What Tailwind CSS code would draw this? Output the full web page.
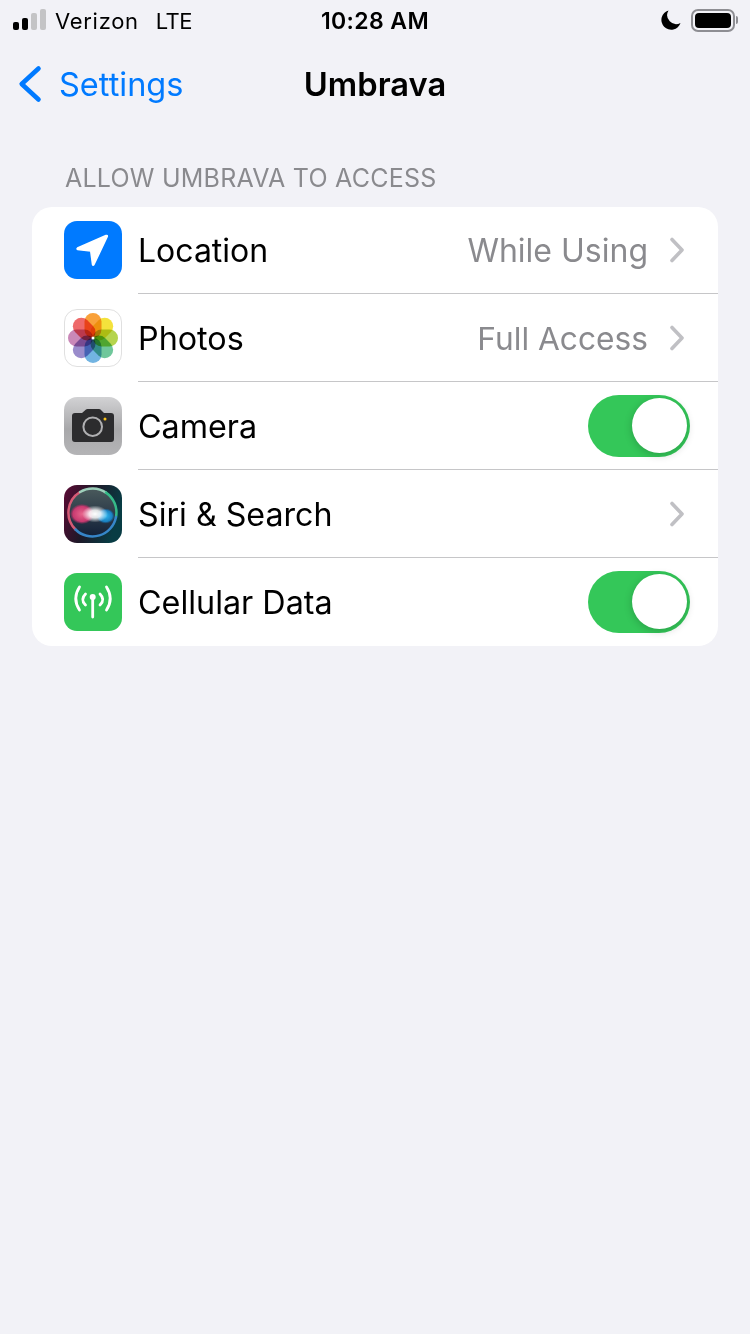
<!DOCTYPE html>
<html lang="en">
<head>
  <meta charset="UTF-8">
  <meta name="viewport" content="width=device-width, initial-scale=1.0">
  <title>Umbrava</title>
  <script src="https://cdn.jsdelivr.net/npm/@tailwindcss/browser@4"></script>
</head>
<body class="bg-[#f2f2f7] min-h-[1334px] font-['Inter','Liberation_Sans',sans-serif] text-black">

  <!-- Status bar -->
  <div class="h-10 flex items-center justify-between pl-[13px] pr-[12px] relative">
    <div class="flex items-center">
      <div class="flex items-end gap-[3px] h-[21px] w-[33px] mb-px">
        <div class="w-[6px] h-[8px] shrink-0 rounded-[2px] bg-black"></div>
        <div class="w-[6px] h-[12px] shrink-0 rounded-[2px] bg-black"></div>
        <div class="w-[6px] h-[17px] shrink-0 rounded-[2px] bg-[#c4c4c6]"></div>
        <div class="w-[6px] h-[21px] shrink-0 rounded-[2px] bg-[#c4c4c6]"></div>
      </div>
      <span class="ml-[9px] mt-[2px] text-[22px] leading-none tracking-[0.7px]">Verizon</span>
      <span class="ml-[17px] mt-[2px] text-[22px] leading-none tracking-[-0.5px]">LTE</span>
    </div>
    <div class="absolute left-0 right-0 mt-[2px] text-center text-[23px] font-semibold leading-none tracking-[0.4px]">10:28 AM</div>
    <div class="flex items-center">
      <svg class="w-[20px] h-[20px] mr-[10px]" viewBox="0 0 20 20"><path d="M7.500 0.500 A9.800 9.800 0 1 0 19.500 13 A9 9 0 0 1 7.500 0.500 Z" fill="#000"/></svg>
      <div class="w-[44px] h-[23px] rounded-[7px] border-2 border-[#8e8e93] p-[2px]">
        <div class="w-full h-full rounded-[4px] bg-black"></div>
      </div>
      <div class="w-[2px] h-[8px] ml-[1px] rounded-r-sm bg-[#8e8e93]"></div>
    </div>
  </div>

  <!-- Nav bar -->
  <div class="h-[88px] flex items-center relative">
    <svg class="w-[26px] h-[40px] ml-[18px]" viewBox="0 0 26 40"><path d="M20.500 4.500 L3.700 20 L20.500 35.500" fill="none" stroke="#007aff" stroke-width="4.600" stroke-linecap="round" stroke-linejoin="round"/></svg>
    <span class="ml-[15px] mt-[2px] text-[32.500px] leading-none text-[#007aff]">Settings</span>
    <div class="absolute left-0 right-0 text-center text-[32.700px] font-semibold leading-none">Umbrava</div>
  </div>

  <!-- Section -->
  <div class="pl-[65px] pt-[37px] h-[79px] text-[25px] leading-[26px] tracking-[0.23px] text-[#8a8a8e]">ALLOW UMBRAVA TO ACCESS</div>

  <div class="mx-8 bg-white rounded-[20px] overflow-hidden">

    <!-- Location -->
    <div class="h-[87px] flex items-center pl-8 pr-7 pb-px relative">
      <svg class="w-[58px] h-[58px] shrink-0" viewBox="0 0 58 58">
        <rect width="58" height="58" rx="13" fill="#007aff"/>
        <path d="M13.500 27 L42 14.500 Q43.800 14 43.200 15.800 L30 43.500 Q29 45 28.500 43.500 L26.700 30 L13.500 28.500 Q12.500 27.800 13.500 27 Z" fill="#fff" stroke="#fff" stroke-width="1.500" stroke-linejoin="round"/>
      </svg>
      <span class="ml-[16px] mt-[2px] text-[32px] leading-none">Location</span>
      <span class="ml-auto mt-px text-[32px] leading-none text-[#8a8a8e]">While Using</span>
      <svg class="w-[16px] h-[26px] ml-[21px] mr-[5px]" viewBox="0 0 16 26"><path d="M3 2.500 L13 13 L3 23.500" fill="none" stroke="#c0c0c4" stroke-width="3.600" stroke-linecap="round" stroke-linejoin="round"/></svg>
      <div class="absolute left-[106px] right-0 bottom-0 h-px bg-[#c6c6c8]"></div>
    </div>

    <!-- Photos -->
    <div class="h-[88px] flex items-center pl-8 pr-7 relative">
      <svg class="w-[58px] h-[58px] shrink-0" viewBox="0 0 58 58">
        <rect x="0.500" y="0.500" width="57" height="57" rx="12.500" fill="#fff" stroke="#e0e0e0"/>
        <g class="isolate">
          <rect x="20.500" y="4" width="17" height="25" rx="8.500" fill="#f9a13a" class="mix-blend-multiply"/>
          <rect x="20.500" y="4" width="17" height="25" rx="8.500" fill="#f4e23c" class="mix-blend-multiply" transform="rotate(45 29 29)"/>
          <rect x="20.500" y="4" width="17" height="25" rx="8.500" fill="#b5d44e" class="mix-blend-multiply" transform="rotate(90 29 29)"/>
          <rect x="20.500" y="4" width="17" height="25" rx="8.500" fill="#6fc79b" class="mix-blend-multiply" transform="rotate(135 29 29)"/>
          <rect x="20.500" y="4" width="17" height="25" rx="8.500" fill="#72b4e2" class="mix-blend-multiply" transform="rotate(180 29 29)"/>
          <rect x="20.500" y="4" width="17" height="25" rx="8.500" fill="#9a8ccb" class="mix-blend-multiply" transform="rotate(225 29 29)"/>
          <rect x="20.500" y="4" width="17" height="25" rx="8.500" fill="#c988b8" class="mix-blend-multiply" transform="rotate(270 29 29)"/>
          <rect x="20.500" y="4" width="17" height="25" rx="8.500" fill="#ee6a6a" class="mix-blend-multiply" transform="rotate(315 29 29)"/>
        </g>
        <circle cx="29" cy="29" r="1.500" fill="#fff"/>
      </svg>
      <span class="ml-[16px] mt-[2px] text-[32.300px] leading-none">Photos</span>
      <span class="ml-auto mt-[2px] text-[31.700px] leading-none text-[#8a8a8e]">Full Access</span>
      <svg class="w-[16px] h-[26px] ml-[21px] mr-[5px]" viewBox="0 0 16 26"><path d="M3 2.500 L13 13 L3 23.500" fill="none" stroke="#c0c0c4" stroke-width="3.600" stroke-linecap="round" stroke-linejoin="round"/></svg>
      <div class="absolute left-[106px] right-0 bottom-0 h-px bg-[#c6c6c8]"></div>
    </div>

    <!-- Camera -->
    <div class="h-[88px] flex items-center pl-8 pr-7 relative">
      <svg class="w-[58px] h-[58px] shrink-0" viewBox="0 0 58 58">
        <defs><linearGradient id="camBg" x1="0" y1="0" x2="0" y2="1"><stop offset="0" stop-color="#d2d2d4"/><stop offset="0.55" stop-color="#a8a8aa"/><stop offset="1" stop-color="#b4b4b6"/></linearGradient></defs>
        <rect width="58" height="58" rx="13" fill="url(#camBg)"/>
        <path d="M11 16 H18 L22 12.500 Q22.500 12 23.500 12 H35 Q36 12 36.500 12.500 L40 16 H47 Q50 16 50 19 V42 Q50 45 47 45 H11 Q8 45 8 42 V19 Q8 16 11 16 Z" fill="#2c2c2e"/>
        <circle cx="28.700" cy="29.700" r="9.300" fill="none" stroke="#b0b0b2" stroke-width="2"/>
        <circle cx="41" cy="22" r="1.500" fill="#fcc419"/>
      </svg>
      <span class="ml-[16px] mt-[2px] text-[32.300px] leading-none">Camera</span>
      <div class="ml-auto w-[102px] h-[62px] rounded-full bg-[#34c759] relative">
        <div class="absolute right-[3px] top-[3px] w-[55px] h-[55px] rounded-full bg-white shadow-[0_2px_8px_rgba(0,0,0,0.2)]"></div>
      </div>
      <div class="absolute left-[106px] right-0 bottom-0 h-px bg-[#c6c6c8]"></div>
    </div>

    <!-- Siri -->
    <div class="h-[88px] flex items-center pl-8 pr-7 relative">
      <svg class="w-[58px] h-[58px] shrink-0" viewBox="0 0 58 58">
        <defs>
          <linearGradient id="siriBg" x1="0" y1="0" x2="1" y2="0.300"><stop offset="0" stop-color="#5c0a34"/><stop offset="0.5" stop-color="#1e1828"/><stop offset="1" stop-color="#083c44"/></linearGradient>
          <linearGradient id="siriInner" x1="0" y1="0" x2="0" y2="1"><stop offset="0" stop-color="#4a5a5c"/><stop offset="1" stop-color="#122038"/></linearGradient>
          <radialGradient id="siriGlow"><stop offset="0" stop-color="#fff"/><stop offset="0.45" stop-color="#fff" stop-opacity="0.85"/><stop offset="1" stop-color="#fff" stop-opacity="0"/></radialGradient>
          <radialGradient id="siriPink"><stop offset="0" stop-color="#e8648c"/><stop offset="0.75" stop-color="#c83a70"/><stop offset="1" stop-color="#a82a60" stop-opacity="0.15"/></radialGradient>
          <radialGradient id="siriBlue"><stop offset="0" stop-color="#30b8f0"/><stop offset="0.75" stop-color="#1a80c0"/><stop offset="1" stop-color="#1060a0" stop-opacity="0.15"/></radialGradient>
        </defs>
        <rect width="58" height="58" rx="13" fill="url(#siriBg)"/>
        <circle cx="28.500" cy="27.500" r="24" fill="url(#siriInner)"/>
        <g fill="none" stroke-width="2.500" stroke-linecap="round" opacity="0.9">
          <path d="M11.500 44.500 A24 24 0 0 1 16 7" stroke="#e8607c"/>
          <path d="M16 7 A24 24 0 0 1 42 7.600" stroke="#a8e0c8"/>
          <path d="M42 7.600 A24 24 0 0 1 52 32" stroke="#38c890"/>
          <path d="M52 32 A24 24 0 0 1 11.500 44.500" stroke="#3a90d8"/>
        </g>
        <ellipse cx="18" cy="29" rx="12" ry="10" fill="url(#siriPink)"/>
        <ellipse cx="41.500" cy="31" rx="9" ry="7.500" fill="url(#siriBlue)"/>
        <ellipse cx="31" cy="29" rx="13" ry="8.500" fill="url(#siriGlow)"/>
      </svg>
      <span class="ml-[16px] mt-[2px] text-[32.200px] leading-none">Siri &amp; Search</span>
      <svg class="w-[16px] h-[26px] ml-auto mr-[5px]" viewBox="0 0 16 26"><path d="M3 2.500 L13 13 L3 23.500" fill="none" stroke="#c0c0c4" stroke-width="3.600" stroke-linecap="round" stroke-linejoin="round"/></svg>
      <div class="absolute left-[106px] right-0 bottom-0 h-px bg-[#c6c6c8]"></div>
    </div>

    <!-- Cellular -->
    <div class="h-[88px] flex items-center pl-8 pr-7">
      <svg class="w-[58px] h-[58px] shrink-0" viewBox="0 0 58 58">
        <rect width="58" height="58" rx="13" fill="#34c759"/>
        <g fill="none" stroke="#fff" stroke-width="2.800" stroke-linecap="round">
          <path d="M28.700 26 V44"/>
          <path d="M21.500 21 Q16 26.500 21.500 32"/>
          <path d="M36 21 Q41.500 26.500 36 32"/>
          <path d="M15.500 14 Q8 25.500 15.500 37"/>
          <path d="M42.500 14 Q50 25.500 42.500 37"/>
        </g>
        <circle cx="28.700" cy="24" r="3" fill="#fff"/>
      </svg>
      <span class="ml-[16px] mt-[2px] text-[32.300px] leading-none">Cellular Data</span>
      <div class="ml-auto w-[102px] h-[62px] rounded-full bg-[#34c759] relative">
        <div class="absolute right-[3px] top-[3px] w-[55px] h-[55px] rounded-full bg-white shadow-[0_2px_8px_rgba(0,0,0,0.2)]"></div>
      </div>
    </div>
  </div>

</body>
</html>
